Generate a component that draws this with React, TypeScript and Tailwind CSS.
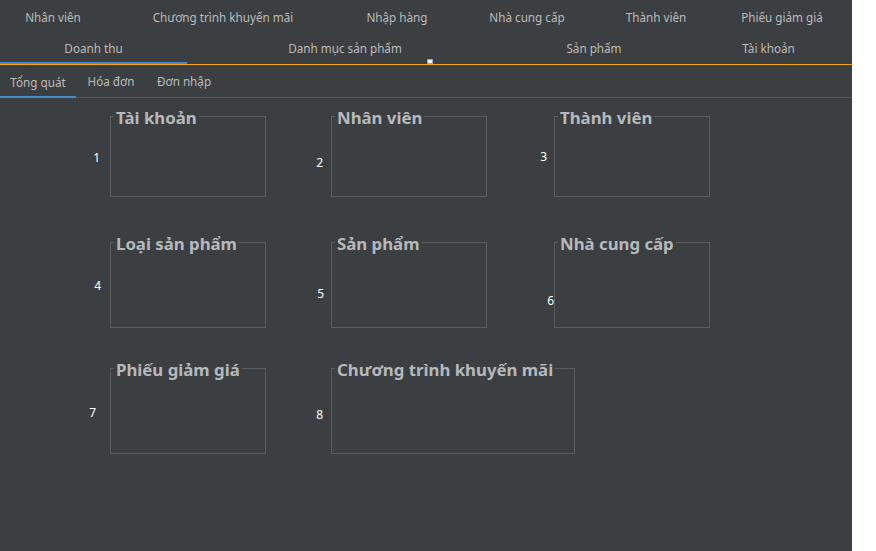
import React from "react";

const topRow = [
  { label: "Nhân viên", w: "w-[106px]" },
  { label: "Chương trình khuyến mãi", w: "w-[234px]" },
  { label: "Nhập hàng", w: "w-[114px]" },
  { label: "Nhà cung cấp", w: "w-[146px]" },
  { label: "Thành viên", w: "w-[112px]" },
  { label: "Phiếu giảm giá", w: "w-[140px]" },
];

const bottomRow = [
  { label: "Doanh thu", w: "w-[187px]", active: true },
  { label: "Danh mục sản phẩm", w: "w-[316px]" },
  { label: "Sản phẩm", w: "w-[182px]" },
  { label: "Tài khoản", w: "w-[167px]" },
];

const subTabs = [
  { label: "Tổng quát", w: "w-[76px]", active: true },
  { label: "Hóa đơn", w: "w-[70px]" },
  { label: "Đơn nhập", w: "w-[76px]" },
];

type Cell = {
  n: string;
  title: string;
  colW: string;
  labelW: string;
  labelCls: string;
  boxW: string;
};

const rows: { cls: string; boxH: string; cells: Cell[] }[] = [
  {
    cls: "mt-[18px]",
    boxH: "h-[81px]",
    cells: [
      { n: "1", title: "Tài khoản", colW: "w-[300px]", labelW: "w-[110px]", labelCls: "pr-[10px] pt-[34px]", boxW: "w-[156px]" },
      { n: "2", title: "Nhân viên", colW: "w-[224px]", labelW: "w-[31px]", labelCls: "pr-[8px] pt-[39px]", boxW: "w-[156px]" },
      { n: "3", title: "Thành viên", colW: "w-[300px]", labelW: "w-[30px]", labelCls: "pr-[7px] pt-[33px]", boxW: "w-[156px]" },
    ],
  },
  {
    cls: "mt-[45px]",
    boxH: "h-[86px]",
    cells: [
      { n: "4", title: "Loại sản phẩm", colW: "w-[300px]", labelW: "w-[110px]", labelCls: "pr-[9px] pt-[36px]", boxW: "w-[156px]" },
      { n: "5", title: "Sản phẩm", colW: "w-[224px]", labelW: "w-[31px]", labelCls: "pr-[7px] pt-[44px]", boxW: "w-[156px]" },
      { n: "6", title: "Nhà cung cấp", colW: "w-[300px]", labelW: "w-[30px]", labelCls: "pr-0 pt-[51px]", boxW: "w-[156px]" },
    ],
  },
  {
    cls: "mt-[40px]",
    boxH: "h-[86px]",
    cells: [
      { n: "7", title: "Phiếu giảm giá", colW: "w-[300px]", labelW: "w-[110px]", labelCls: "pr-[14px] pt-[37px]", boxW: "w-[156px]" },
      { n: "8", title: "Chương trình khuyến mãi", colW: "w-[300px]", labelW: "w-[31px]", labelCls: "pr-[8px] pt-[39px]", boxW: "w-[244px]" },
    ],
  },
];

const App = () => {
  return (
    <div className="w-[876px] h-[551px] bg-white" style={{ fontFamily: "'Noto Sans', 'Open Sans', sans-serif" }}>
      <div className="w-[852px] h-[551px] bg-[#3c3f41] flex flex-col">
        {/* Main tabs, wrapped in two rows */}
        <div className="relative">
          <div className="flex h-[32px]">
            {topRow.map((t) => (
              <div key={t.label} className={`${t.w} flex items-center justify-center pt-[3px] text-[11.7px] text-[#bbbbbb]`}>
                {t.label}
              </div>
            ))}
          </div>
          <div className="flex h-[32px]">
            {bottomRow.map((t) => (
              <div
                key={t.label}
                className={`${t.w} flex items-center justify-center text-[11.7px] text-[#bbbbbb] ${
                  t.active ? "border-b-2 border-[#4a88c7] pt-[4px]" : "pt-[2px]"
                }`}
              >
                {t.label}
              </div>
            ))}
          </div>
          <div className="absolute left-[427px] top-[59px] w-[6px] h-[5px] border border-[#8fa7c4] bg-[#eef2f7]"></div>
        </div>
        <div className="h-px bg-[#f5a30f]"></div>

        {/* Sub tabs */}
        <div className="flex h-[33px] border-b border-[#555759]">
          {subTabs.map((t) => (
            <div
              key={t.label}
              className={`${t.w} flex items-center justify-center text-[11.7px] text-[#bbbbbb] ${
                t.active ? "border-b-2 border-[#4a88c7] -mb-px pt-[4px]" : "pt-[2px]"
              }`}
            >
              {t.label}
            </div>
          ))}
        </div>

        {/* Overview panels */}
        <div className="flex flex-col">
          {rows.map((row, i) => (
            <div key={i} className={`flex ${row.cls}`}>
              {row.cells.map((c) => (
                <div key={c.n} className={`${c.colW} flex items-start shrink-0`}>
                  <div className={`${c.labelW} ${c.labelCls} text-right text-[12px] leading-[16px] text-white shrink-0`}>
                    {c.n}
                  </div>
                  <div className={`relative ${c.boxW} ${row.boxH} border border-[#5a5c5e] shrink-0`}>
                    <span className="absolute left-[3px] top-[-9px] px-[2px] bg-[#3c3f41] text-[16.8px] leading-[20px] font-bold text-[#b6b9bc] whitespace-nowrap">
                      {c.title}
                    </span>
                  </div>
                </div>
              ))}
            </div>
          ))}
        </div>
      </div>
    </div>
  );
};

export default App;
